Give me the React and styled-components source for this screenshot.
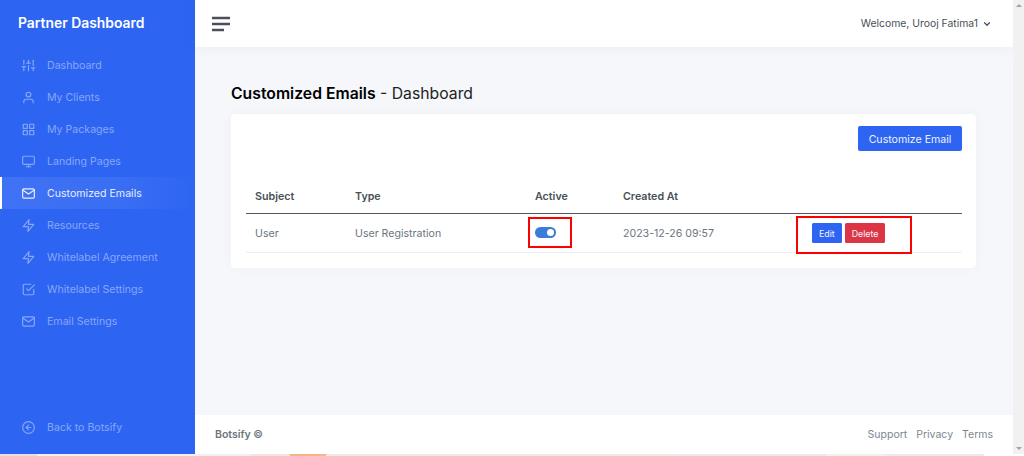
import React from "react";
import styled, { createGlobalStyle } from "styled-components";
import { FiSliders, FiUser, FiGrid, FiMonitor, FiMail, FiZap, FiCheckSquare, FiArrowLeftCircle, FiChevronDown } from "react-icons/fi";

const Global = createGlobalStyle`
  html, body { margin: 0; padding: 0; width: 1024px; height: 456px; overflow: hidden; background: #fff; }
  body { font-family: Inter, "Liberation Sans", sans-serif; -webkit-font-smoothing: antialiased; }
  * { box-sizing: border-box; }
`;

const Shell = styled.div`
  display: flex;
  width: 1024px;
  height: 456px;
  flex-direction: column;
`;
const Window = styled.div`
  display: flex;
  height: 454px;
`;
const BottomEdge = styled.div`
  display: flex;
  height: 2px;
`;
const EdgeSegment = styled.div`
  width: ${p => p.$w}px;
  background: ${p => p.$c};
`;
const Sidebar = styled.aside`
  width: 195px;
  flex: none;
  background: #2d65f2;
  display: flex;
  flex-direction: column;
`;
const Brand = styled.div`
  height: 46px;
  padding-left: 18px;
  display: flex;
  align-items: center;
  color: #fff;
  font-size: 13.9px;
  font-weight: 600;
`;
const Nav = styled.nav`
  display: flex;
  flex-direction: column;
  flex: 1;
  padding-top: 3px;
`;
const NavItem = styled.a`
  display: flex;
  align-items: center;
  height: 32px;
  gap: 12px;
  padding-left: ${p => (p.$active ? 20 : 22)}px;
  font-size: 10.6px;
  font-weight: 400;
  color: ${p => (p.$active ? "#e9eefe" : "#86a7f8")};
  background: ${p => (p.$active ? "linear-gradient(90deg, #3f72f4 0%, #3a6ef3 60%, #2d65f2 100%)" : "transparent")};
  border-left: ${p => (p.$active ? "2px solid #fff" : "0")};
  svg { width: 13px; height: 13px; flex: none; transform: scale(1.08); }
`;
const BackItem = styled(NavItem)`
  margin-top: auto;
  margin-bottom: 11px;
`;
const Column = styled.div`
  flex: 1;
  display: flex;
  flex-direction: column;
  min-width: 0;
  background: #f5f7fb;
`;
const Topbar = styled.header`
  height: 47px;
  flex: none;
  background: #fff;
  display: flex;
  align-items: center;
  justify-content: space-between;
  padding: 0 21px 0 17px;
  box-shadow: 0 0 16px rgba(33, 37, 41, 0.05);
`;
const Hamburger = styled.svg`
  width: 18px;
  height: 16px;
  display: block;
`;
const Welcome = styled.div`
  display: flex;
  align-items: center;
  gap: 4px;
  font-size: 10.4px;
  color: #495057;
  svg { width: 10px; height: 10px; stroke-width: 3; }
`;
const Content = styled.main`
  flex: 1;
  padding: 37px 37px 0 36px;
`;
const Heading = styled.h1`
  margin: 0 0 10px;
  font-size: 15.75px;
  line-height: 20px;
  font-weight: 400;
  color: #222;
  strong { font-weight: 600; color: #000; }
`;
const Card = styled.section`
  background: #fff;
  border-radius: 4px;
  padding: 12px 14px 15px 15px;
  box-shadow: 0 0 14px rgba(33, 37, 41, 0.03);
`;
const CardTop = styled.div`
  display: flex;
  justify-content: flex-end;
  margin-bottom: 30px;
`;
const PrimaryButton = styled.button`
  height: 25px;
  width: 104px;
  padding: 2px 0 0;
  border: 0;
  border-radius: 2px;
  background: #2d65f2;
  color: #eef2fe;
  font: 400 10.6px Inter, sans-serif;
`;
const Table = styled.table`
  width: 100%;
  table-layout: fixed;
  border-collapse: collapse;
  font-size: 10.6px;
`;
const Col = styled.col`
  width: ${p => p.$w}px;
`;
const Th = styled.th`
  height: 32px;
  padding: 0 9px;
  text-align: left;
  font-size: 10.7px;
  font-weight: 600;
  color: #495057;
  border-bottom: 1.5px solid #50565c;
`;
const Td = styled.td`
  height: 39px;
  padding: 2px 9px 0;
  color: #6c757d;
  border-bottom: 1px solid #eceef1;
  position: relative;
`;
const Toggle = styled.span`
  display: block;
  width: 21px;
  height: 11px;
  border-radius: 6px;
  background: #3a7bdc;
  position: relative;
  margin-top: -3px;
  &::after {
    content: "";
    position: absolute;
    right: 2px;
    top: 2px;
    width: 7px;
    height: 7px;
    border-radius: 50%;
    background: #fff;
  }
`;
const Actions = styled.div`
  display: flex;
  gap: 3px;
  margin-top: -1px;
`;
const SmallButton = styled.button`
  height: 20px;
  padding: 0 ${p => p.$pad}px;
  border: 0;
  border-radius: 1.5px;
  background: ${p => p.$bg};
  color: #f2f4fd;
  font: 400 8.8px Inter, sans-serif;
`;
const Annotation = styled.div`
  position: absolute;
  left: ${p => p.$l}px;
  top: ${p => p.$t}px;
  width: ${p => p.$w}px;
  height: ${p => p.$h}px;
  border: 2px solid #f00;
  pointer-events: none;
`;
const Footer = styled.footer`
  height: 39px;
  flex: none;
  background: #fff;
  display: flex;
  align-items: center;
  justify-content: space-between;
  padding: 0 20px 0 20px;
  font-size: 10.5px;
  color: #6c757d;
`;
const FooterBrand = styled.div`
  font-weight: 600;
`;
const FooterLinks = styled.div`
  display: flex;
  gap: 9px;
  color: #7c8792;
`;
const Scrollbar = styled.div`
  width: 11px;
  flex: none;
  background: #f1f1f1;
  display: flex;
  flex-direction: column;
  justify-content: space-between;
  align-items: center;
  padding: 4px 0;
`;
const Arrow = styled.span`
  width: 0;
  height: 0;
  border-left: 3px solid transparent;
  border-right: 3px solid transparent;
  ${p => (p.$down ? "border-top: 3px solid #a3a3a3;" : "border-bottom: 3px solid #a3a3a3;")}
`;

const items = [
  [FiSliders, "Dashboard"],
  [FiUser, "My Clients"],
  [FiGrid, "My Packages"],
  [FiMonitor, "Landing Pages"],
  [FiMail, "Customized Emails", true],
  [FiZap, "Resources"],
  [FiZap, "Whitelabel Agreement"],
  [FiCheckSquare, "Whitelabel Settings"],
  [FiMail, "Email Settings"],
];

const edge = [
  [37, "#e6e0de"],
  [214, "#eff1f0"],
  [39, "#efe6e1"],
  [36, "#f5b588"],
  [350, "#f0eae7"],
  [150, "#eee9e9"],
  [60, "#eff2ea"],
  [98, "#ecebe9"],
];

export default function App() {
  return (
    <Shell>
      <Global />
      <Window>
        <Sidebar>
          <Brand>Partner Dashboard</Brand>
          <Nav>
            {items.map(([Icon, label, active]) => (
              <NavItem key={label} $active={active}><Icon />{label}</NavItem>
            ))}
            <BackItem><FiArrowLeftCircle />Back to Botsify</BackItem>
          </Nav>
        </Sidebar>
        <Column>
          <Topbar>
            <Hamburger viewBox="0 0 18 16">
              <path d="M0 2h18M0 8h18M0 14h12" stroke="#495057" strokeWidth="2.4" fill="none" />
            </Hamburger>
            <Welcome>Welcome, Urooj Fatima1 <FiChevronDown /></Welcome>
          </Topbar>
          <Content>
            <Heading><strong>Customized Emails</strong> - Dashboard</Heading>
            <Card>
              <CardTop><PrimaryButton>Customize Email</PrimaryButton></CardTop>
              <Table>
                <colgroup>
                  <Col $w={100} /><Col $w={180} /><Col $w={88} /><Col $w={189} /><Col />
                </colgroup>
                <thead>
                  <tr><Th>Subject</Th><Th>Type</Th><Th>Active</Th><Th>Created At</Th><Th /></tr>
                </thead>
                <tbody>
                  <tr>
                    <Td>User</Td>
                    <Td>User Registration</Td>
                    <Td><Toggle /><Annotation $l={2} $t={3} $w={44} $h={31} /></Td>
                    <Td>2023-12-26 09:57</Td>
                    <Td>
                      <Actions>
                        <SmallButton $bg="#2d65f2" $pad={7}>Edit</SmallButton>
                        <SmallButton $bg="#dc3545" $pad={7}>Delete</SmallButton>
                      </Actions>
                      <Annotation $l={-7} $t={2} $w={116} $h={38} />
                    </Td>
                  </tr>
                </tbody>
              </Table>
            </Card>
          </Content>
          <Footer>
            <FooterBrand>Botsify ©</FooterBrand>
            <FooterLinks><span>Support</span><span>Privacy</span><span>Terms</span></FooterLinks>
          </Footer>
        </Column>
        <Scrollbar><Arrow /><Arrow $down /></Scrollbar>
      </Window>
      <BottomEdge>
        {edge.map(([w, c], i) => <EdgeSegment key={i} $w={w} $c={c} />)}
      </BottomEdge>
    </Shell>
  );
}
